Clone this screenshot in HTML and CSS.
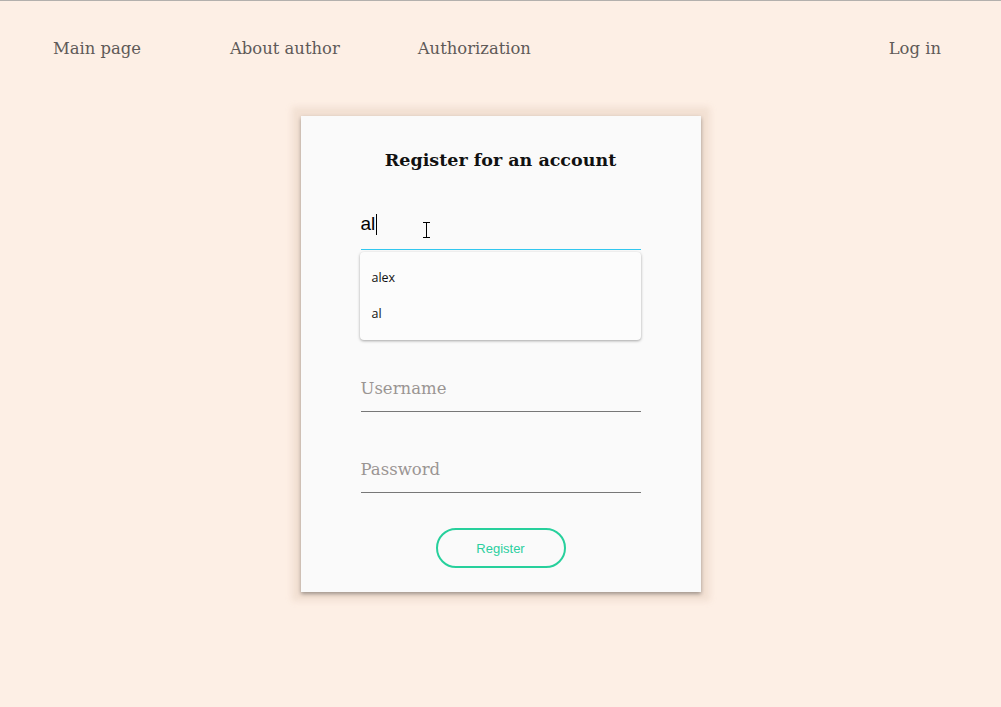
FILE: index.html
```html
<!DOCTYPE html>
<html>
<head>
<meta charset="utf-8">
<link rel="stylesheet" href="styles.css">
</head>
<body>
<header class="nav">
  <a class="nav-link" href="#">Main page</a>
  <a class="nav-link" href="#">About author</a>
  <a class="nav-link" href="#">Authorization</a>
  <a class="nav-link login" href="#">Log in</a>
</header>
<main class="main">
  <form class="card">
    <h1 class="title">Register for an account</h1>
    <div class="field focused">
      <div class="input-text">al<span class="caret"></span></div>
      <svg class="ibeam" width="9" height="16" viewBox="0 0 9 16"><path d="M1 0.5h7M1 15.5h7M4.5 0.5v15" stroke="#000" stroke-width="1" fill="none"/></svg>
      <ul class="suggest">
        <li>alex</li>
        <li>al</li>
      </ul>
    </div>
    <div class="field">
      <div class="placeholder">Username</div>
    </div>
    <div class="field">
      <div class="placeholder">Password</div>
    </div>
    <div class="actions">
      <button class="btn" type="button">Register</button>
    </div>
  </form>
</main>
</body>
</html>
```
FILE: styles.css
```css
html, body {
  margin: 0;
  padding: 0;
}
body {
  background: #fdefe5;
  border-top: 1px solid #b3b0ad;
  height: 706px;
  font-family: "DejaVu Serif", serif;
  overflow: hidden;
}
.nav {
  display: flex;
  align-items: center;
  height: 94px;
  padding: 0 60px 0 53px;
  box-sizing: border-box;
}
.nav-link {
  color: #5f5a58;
  text-decoration: none;
  font-size: 16.4px;
  margin-right: 89px;
}
.nav-link:nth-child(2) { margin-right: 78px; }
.nav-link.login {
  margin-left: auto;
  margin-right: 0;
}
.main {
  display: flex;
  justify-content: center;
  padding-top: 21px;
}
.card {
  width: 400px;
  height: 476px;
  box-sizing: border-box;
  background: #fafafa;
  padding: 31px 60px 0 60px;
  box-shadow: 0 2px 4px rgba(0,0,0,0.35), 0 0 6px 9px rgba(215,185,165,0.28);
  display: flex;
  flex-direction: column;
}
.title {
  margin: 0;
  text-align: center;
  font-size: 17.5px;
  font-weight: 700;
  color: #111;
  line-height: 26px;
}
.field {
  position: relative;
  border-bottom: 1px solid #777;
  height: 44px;
  margin-top: 37px;
  display: flex;
  align-items: flex-end;
}
.field.focused {
  margin-top: 28px;
  height: 48px;
  border-bottom: 1px solid #31c7ef;
}
.field + .field { margin-top: 36px; }
.field.focused + .field { margin-top: 117px; }
.input-text {
  font-family: "Liberation Sans", Arial, sans-serif;
  font-size: 19px;
  color: #000;
  padding-bottom: 14px;
  display: flex;
  align-items: center;
}
.caret {
  display: inline-block;
  width: 1px;
  height: 21px;
  background: #000;
  margin-left: 1px;
}
.ibeam {
  position: absolute;
  left: 61px;
  top: 21px;
}
.placeholder {
  font-size: 16.5px;
  color: #9a9593;
  padding-bottom: 13px;
}
.suggest {
  position: absolute;
  left: -1px;
  right: 0;
  top: 51px;
  margin: 0;
  padding: 8px 0;
  list-style: none;
  background: #fcfcfc;
  border-radius: 4px;
  box-shadow: 0 1px 3px rgba(0,0,0,0.35);
  font-family: "Open Sans", sans-serif;
  font-size: 12.5px;
  color: #111;
}
.suggest li {
  padding: 0 12px;
  line-height: 36px;
}
.actions {
  display: flex;
  justify-content: center;
  margin-top: 35px;
}
.btn {
  width: 130px;
  height: 40px;
  border: 2px solid #27d09c;
  border-radius: 20px;
  background: transparent;
  color: #2bcf9e;
  font-family: "Liberation Sans", Arial, sans-serif;
  font-size: 13px;
  padding: 0;
}
```
